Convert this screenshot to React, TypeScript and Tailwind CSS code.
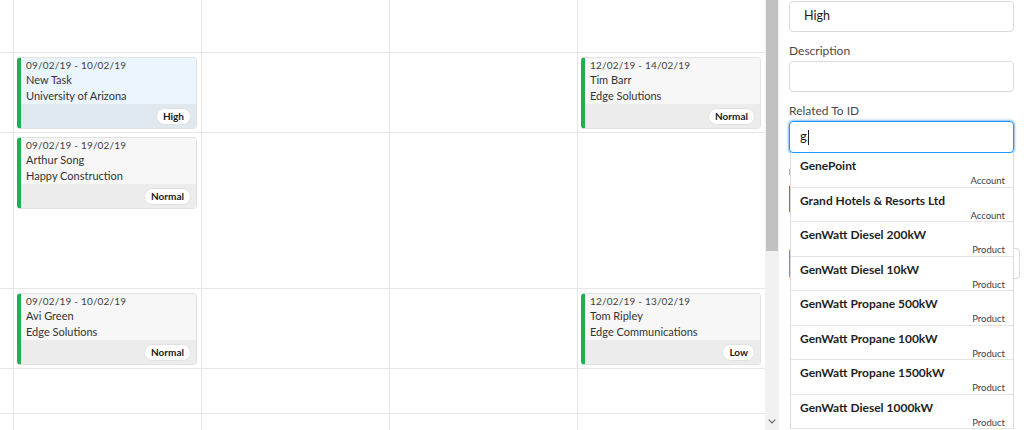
import type { ReactNode } from 'react'

type Task = {
  dates: string
  name: string
  company: string
  priority: string
  active?: boolean
}

const ROWS: { h: string; cells: (Task | null)[] }[] = [
  { h: 'h-[53px]', cells: [null, null, null, null] },
  {
    h: 'h-[80px]',
    cells: [
      { dates: '09/02/19 - 10/02/19', name: 'New Task', company: 'University of Arizona', priority: 'High', active: true },
      null,
      null,
      { dates: '12/02/19 - 14/02/19', name: 'Tim Barr', company: 'Edge Solutions', priority: 'Normal' },
    ],
  },
  {
    h: 'h-[156px]',
    cells: [
      { dates: '09/02/19 - 19/02/19', name: 'Arthur Song', company: 'Happy Construction', priority: 'Normal' },
      null,
      null,
      null,
    ],
  },
  {
    h: 'h-[80px]',
    cells: [
      { dates: '09/02/19 - 10/02/19', name: 'Avi Green', company: 'Edge Solutions', priority: 'Normal' },
      null,
      null,
      { dates: '12/02/19 - 13/02/19', name: 'Tom Ripley', company: 'Edge Communications', priority: 'Low' },
    ],
  },
  { h: 'h-[45px]', cells: [null, null, null, null] },
  { h: 'h-[40px]', cells: [null, null, null, null] },
]

const RESULTS = [
  { name: 'GenePoint', type: 'Account' },
  { name: 'Grand Hotels & Resorts Ltd', type: 'Account' },
  { name: 'GenWatt Diesel 200kW', type: 'Product' },
  { name: 'GenWatt Diesel 10kW', type: 'Product' },
  { name: 'GenWatt Propane 500kW', type: 'Product' },
  { name: 'GenWatt Propane 100kW', type: 'Product' },
  { name: 'GenWatt Propane 1500kW', type: 'Product' },
  { name: 'GenWatt Diesel 1000kW', type: 'Product' },
]

function TaskCard({ task }: { task: Task }) {
  return (
    <div className="h-[72px] flex flex-col rounded-[4px] overflow-hidden border border-[#e2e2e2] border-l-4 border-l-[#1fb14f]">
      <div className={`flex-1 pl-[5px] ${task.active ? 'bg-[#eaf5fe]' : 'bg-[#f7f7f7]'}`}>
        <p className="text-[10px] leading-[14px] text-[#3f3f3f] tracking-[0.2px]">{task.dates}</p>
        <p className="text-[11px] leading-[16px] text-[#333]">{task.name}</p>
        <p className="text-[11px] leading-[16px] text-[#333]">{task.company}</p>
      </div>
      <div className={`h-[24px] flex items-center justify-end pr-[5px] ${task.active ? 'bg-[#dfe8ee]' : 'bg-[#ececec]'}`}>
        <span className="h-[17px] px-[6px] rounded-full bg-white border border-[#e0e0e0] text-[10px] leading-[15px] font-bold text-[#1a1a1a]">
          {task.priority}
        </span>
      </div>
    </div>
  )
}

function Label({ children }: { children: ReactNode }) {
  return <p className="mt-[10px] mb-[1px] text-[12px] leading-[18px] text-[#4a4a4a]">{children}</p>
}

export default function App() {
  return (
    <div className="w-[1024px] h-[430px] overflow-hidden flex bg-white font-['Lato','Open_Sans',sans-serif]">
      {/* calendar */}
      <div className="w-[765px] shrink-0">
        {ROWS.map((row, i) => (
          <div key={i} className={`grid grid-cols-[13px_repeat(4,188px)] border-b border-[#e6e6e6] ${row.h}`}>
            <div />
            {row.cells.map((task, j) => (
              <div key={j} className="border-l border-[#e6e6e6] pt-[4px] pl-[3px] pr-[4px]">
                {task && <TaskCard task={task} />}
              </div>
            ))}
          </div>
        ))}
      </div>

      {/* scrollbar */}
      <div className="w-[14px] shrink-0 bg-[#f1f1f1] flex flex-col">
        <div className="h-[251px] mx-[1px] bg-[#c1c1c1]" />
        <div className="flex-1" />
        <div className="h-[16px] flex items-start justify-center pt-[5px]">
          <svg width="8" height="5" viewBox="0 0 8 5">
            <path d="M0.7 0.7 L4 4 L7.3 0.7" fill="none" stroke="#6b6b6b" strokeWidth="1.2" />
          </svg>
        </div>
      </div>

      {/* form panel */}
      <div className="flex-1 pl-[10px] pr-[10px] pt-[1px]">
        <div className="h-[31px] rounded-[4px] border border-[#dddbda] flex items-center pl-[14px] text-[12.5px] text-[#1a1a1a]">
          High
        </div>
        <Label>Description</Label>
        <div className="h-[31px] rounded-[4px] border border-[#dddbda]" />
        <Label>Related To ID</Label>
        <div className="relative">
          <div className="h-[32px] rounded-[4px] border border-[#1b96ff] shadow-[0_0_3px_#0176d3] flex items-center pl-[10px] text-[13px] text-[#1a1a1a]">
            g<span className="w-px h-[15px] bg-[#222] ml-[1px]" />
          </div>

          {/* fields underneath the dropdown */}
          <div className="mt-[16px] h-[6px] w-[3px] bg-[#e8a16a]" />
          <div className="mt-[11px] h-[26px] border-l-2 border-[#d24b4b]" />
          <div className="mt-[36px] mr-[-6px] h-[31px] rounded-[4px] border border-[#dddbda] border-l-2 border-l-[#5b8fd6]" />

          <div className="absolute left-[1px] right-0 top-[32px] bg-white border-x border-[#dddbda]">
            {RESULTS.map((r) => (
              <div key={r.name} className="h-[34.5px] border-b border-[#e5e5e5] pt-[5px] pl-[9px] pr-[8px]">
                <p className="text-[12px] leading-[16px] font-bold text-[#1f1f1f]">{r.name}</p>
                <p className="text-[9.5px] leading-[13px] text-right text-[#3e3e3c]">{r.type}</p>
              </div>
            ))}
          </div>
        </div>
      </div>
    </div>
  )
}
